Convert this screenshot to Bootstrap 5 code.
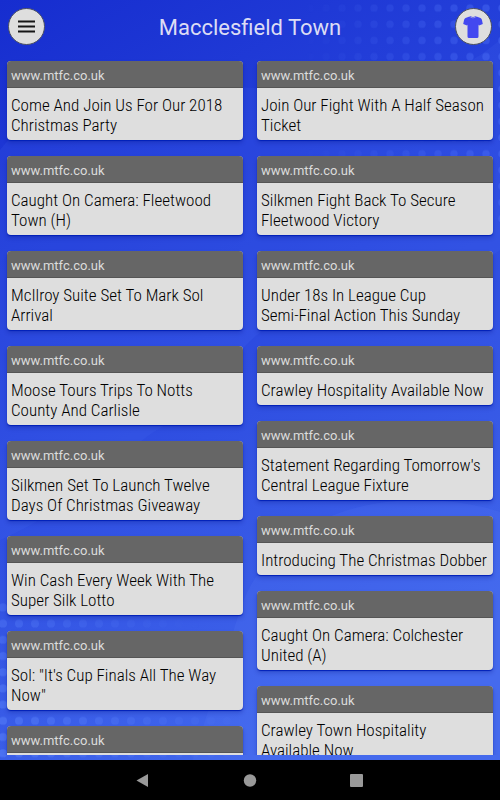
<!DOCTYPE html>
<html lang="en">
<head>
<meta charset="utf-8">
<meta name="viewport" content="width=device-width, initial-scale=1">
<title>Macclesfield Town</title>
<link href="https://cdn.jsdelivr.net/npm/bootstrap@5.3.0/dist/css/bootstrap.min.css" rel="stylesheet">
<style>
  body { font-family: Roboto, "Liberation Sans", sans-serif; background: #2138d4; }
  .backdrop { z-index: 0; pointer-events: none; }
  .app-bar { padding: 8px; }
  .app-title { font-size: 22px; line-height: 28px; color: #dcdcf4; padding-top: 2px; }
  .round-btn { width: 37px; height: 37px; background: #dedede; border: 1px solid #4a4f60; }
  .feed { padding: 8px 7px 0; margin-bottom: 5px; min-height: 0; }
  .feed-columns { gap: 14px; }
  .feed-column { flex: 1 1 0; min-width: 0; gap: 16px; }
  .story { border-radius: 4px; background: #dedede; box-shadow: 0 1px 1px #0020b8, 0 3px 4px rgba(0, 16, 120, .25); }
  .story-source { background: #666; color: #dcdcdc; font-size: 13px; line-height: 20px; padding: 5px 4px 1px; border-bottom: 1px solid #555; border-radius: 4px 4px 0 0; }
  .story-title { font-family: "Roboto Condensed", "Liberation Sans Narrow", Roboto, sans-serif; font-size: 17px; line-height: 20px; padding: 7px 4px 5px; color: #000; }
  .system-bar { height: 40px; background: #000; }
  .system-bar .btn { width: 20px; height: 20px; }
  .key-gap { gap: 87px; }
</style>
<script src="https://cdn.jsdelivr.net/npm/bootstrap@5.3.0/dist/js/bootstrap.bundle.min.js"></script>
</head>
<body>
<div class="vh-100 d-flex flex-column position-relative overflow-hidden">
  <svg class="backdrop position-absolute top-0 start-0 w-100 h-100" viewBox="0 0 500 800" preserveAspectRatio="none" aria-hidden="true">
    <defs>
      <linearGradient id="sky" x1="0" y1="0" x2=".35" y2="1"><stop offset="0" stop-color="#162dcf"/><stop offset=".5" stop-color="#2b49df"/><stop offset="1" stop-color="#4167ec"/></linearGradient>
      <pattern id="dotsR" x="-2" y="0" width="16" height="16.2" patternUnits="userSpaceOnUse"><circle cx="8" cy="8" r="3.700" fill="#4a6cf4"/></pattern>
      <pattern id="dotsL" x="-5" y="0" width="16" height="16.2" patternUnits="userSpaceOnUse"><circle cx="8" cy="8" r="4" fill="#5076f4"/></pattern>
      <linearGradient id="fadeR"><stop offset="0" stop-color="#fff" stop-opacity="0"/><stop offset="1" stop-color="#fff" stop-opacity=".5"/></linearGradient>
      <linearGradient id="fadeL" x1="0" y1="1" x2="1" y2=".4"><stop offset="0" stop-color="#fff" stop-opacity=".8"/><stop offset="1" stop-color="#fff" stop-opacity="0"/></linearGradient>
      <mask id="maskR"><rect x="300" width="200" height="230" fill="url(#fadeR)"/></mask>
      <mask id="maskL"><rect y="600" width="240" height="160" fill="url(#fadeL)"/></mask>
    </defs>
    <rect width="500" height="800" fill="url(#sky)"/>
    <path d="M0 150C20 125 40 100 60 92 100 90 140 90 165 90 280 75 400 125 500 40V250C450 290 380 280 300 310 210 350 250 380 165 425 120 450 90 500 0 540Z" fill="#4a72f4" opacity=".13"/>
    <path d="M240 610C260 550 320 500 420 500 450 500 480 505 500 512V800H180Z" fill="#5b80f5" opacity=".15"/>
    <rect width="500" height="230" fill="url(#dotsR)" mask="url(#maskR)"/>
    <rect y="600" width="240" height="160" fill="url(#dotsL)" mask="url(#maskL)"/>
  </svg>

  <header class="app-bar d-flex align-items-center justify-content-between position-relative">
    <button type="button" class="round-btn btn rounded-circle p-0 d-flex align-items-center justify-content-center" aria-label="Menu">
      <svg width="17" height="13" viewBox="0 0 17 13" aria-hidden="true"><path d="M0 1.500H17M0 6.500H17M0 11.500H17" stroke="#161616" stroke-width="1.800"/></svg>
    </button>
    <h1 class="app-title fw-normal m-0">Macclesfield Town</h1>
    <button type="button" class="round-btn btn rounded-circle p-0 d-flex align-items-center justify-content-center" aria-label="Team kit">
      <svg width="20" height="22" viewBox="0 0 20 22" aria-hidden="true"><path d="M6.500 .5 2.500 2Q1.500 2.500 1.100 3.700L.2 8 4 9.400 4.500 8.500V20.500Q4.500 22 6 22H14Q15.500 22 15.500 20.500V8.500L16 9.400 19.800 8 18.900 3.700Q18.500 2.500 17.500 2L13.500 .5Q10 4 6.500 .5Z" fill="#4348f0"/><path d="M7 .5Q10 2.600 13 .5" fill="none" stroke="#4348f0" stroke-width=".8"/></svg>
    </button>
  </header>

  <main class="feed flex-fill overflow-hidden position-relative">
    <div class="feed-columns d-flex align-items-start">
      <div class="feed-column d-flex flex-column">
        <article class="story"><div class="story-source">www.mtfc.co.uk</div><h2 class="story-title fw-light m-0">Come And Join Us For Our 2018 Christmas Party</h2></article>
        <article class="story"><div class="story-source">www.mtfc.co.uk</div><h2 class="story-title fw-light m-0">Caught On Camera: Fleetwood Town (H)</h2></article>
        <article class="story"><div class="story-source">www.mtfc.co.uk</div><h2 class="story-title fw-light m-0">McIlroy Suite Set To Mark Sol<br>Arrival</h2></article>
        <article class="story"><div class="story-source">www.mtfc.co.uk</div><h2 class="story-title fw-light m-0">Moose Tours Trips To Notts<br>County And Carlisle</h2></article>
        <article class="story"><div class="story-source">www.mtfc.co.uk</div><h2 class="story-title fw-light m-0">Silkmen Set To Launch Twelve<br>Days Of Christmas Giveaway</h2></article>
        <article class="story"><div class="story-source">www.mtfc.co.uk</div><h2 class="story-title fw-light m-0">Win Cash Every Week With The<br>Super Silk Lotto</h2></article>
        <article class="story"><div class="story-source">www.mtfc.co.uk</div><h2 class="story-title fw-light m-0">Sol: "It's Cup Finals All The Way<br>Now"</h2></article>
        <article class="story"><div class="story-source">www.mtfc.co.uk</div><h2 class="story-title fw-light m-0">&nbsp;</h2></article>
      </div>
      <div class="feed-column d-flex flex-column">
        <article class="story"><div class="story-source">www.mtfc.co.uk</div><h2 class="story-title fw-light m-0">Join Our Fight With A Half Season<br>Ticket</h2></article>
        <article class="story"><div class="story-source">www.mtfc.co.uk</div><h2 class="story-title fw-light m-0">Silkmen Fight Back To Secure<br>Fleetwood Victory</h2></article>
        <article class="story"><div class="story-source">www.mtfc.co.uk</div><h2 class="story-title fw-light m-0">Under 18s In League Cup<br>Semi-Final Action This Sunday</h2></article>
        <article class="story"><div class="story-source">www.mtfc.co.uk</div><h2 class="story-title fw-light m-0">Crawley Hospitality Available Now</h2></article>
        <article class="story"><div class="story-source">www.mtfc.co.uk</div><h2 class="story-title fw-light m-0">Statement Regarding Tomorrow's<br>Central League Fixture</h2></article>
        <article class="story"><div class="story-source">www.mtfc.co.uk</div><h2 class="story-title fw-light m-0">Introducing The Christmas Dobber</h2></article>
        <article class="story"><div class="story-source">www.mtfc.co.uk</div><h2 class="story-title fw-light m-0">Caught On Camera: Colchester<br>United (A)</h2></article>
        <article class="story"><div class="story-source">www.mtfc.co.uk</div><h2 class="story-title fw-light m-0">Crawley Town Hospitality<br>Available Now</h2></article>
      </div>
    </div>
  </main>

  <nav class="system-bar key-gap d-flex align-items-center justify-content-center flex-shrink-0 position-relative" aria-label="System">
    <button type="button" class="btn border-0 p-0 d-flex" aria-label="Back"><svg width="20" height="20" viewBox="0 0 20 20"><path d="M3.500 10.500 15 4V17Z" fill="#999"/></svg></button>
    <button type="button" class="btn border-0 p-0 d-flex" aria-label="Home"><svg width="20" height="20" viewBox="0 0 20 20"><circle cx="10" cy="10.500" r="6.200" fill="#999"/></svg></button>
    <button type="button" class="btn border-0 p-0 d-flex" aria-label="Recent apps"><svg width="20" height="20" viewBox="0 0 20 20"><rect x="3" y="4" width="13" height="13" rx="1" fill="#999"/></svg></button>
  </nav>
</div>
</body>
</html>
